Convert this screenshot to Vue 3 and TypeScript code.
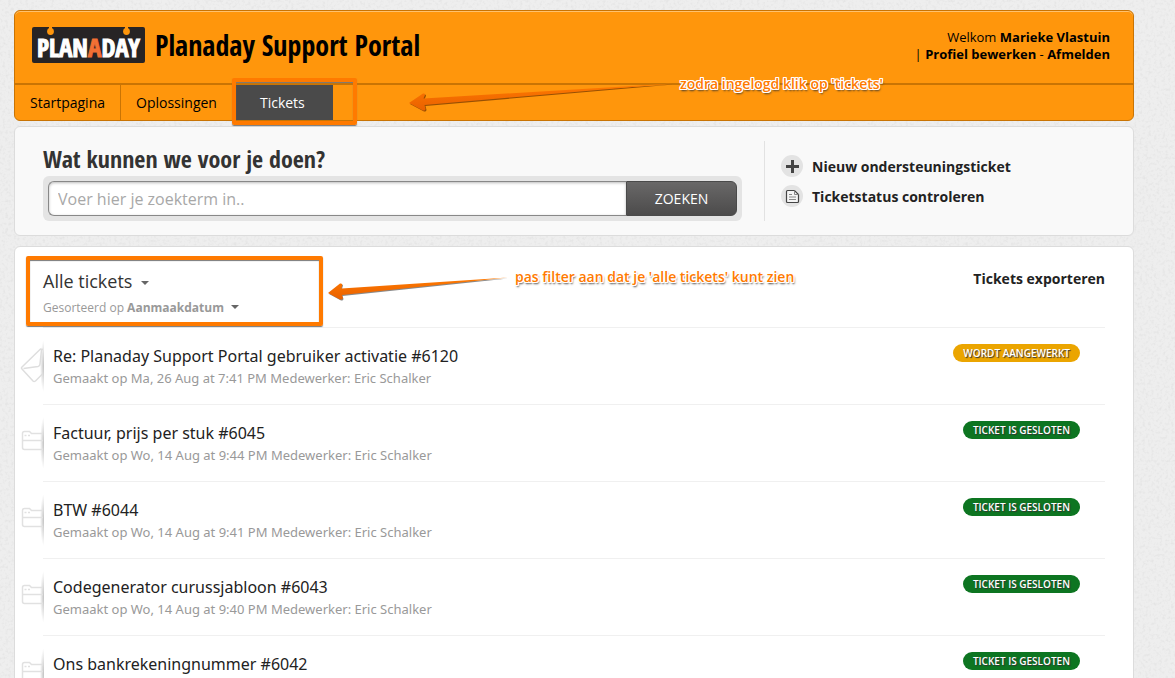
<script setup lang="ts">
import { ref } from 'vue'

interface Ticket {
  id: number
  subject: string
  created?: string
  agent?: string
  status: 'open' | 'closed'
}

const query = ref('')

const tabs = [
  { label: 'Startpagina', active: false },
  { label: 'Oplossingen', active: false },
  { label: 'Tickets', active: true },
]

const statusLabels: Record<Ticket['status'], string> = {
  open: 'Wordt aangewerkt',
  closed: 'Ticket is gesloten',
}

const tickets: Ticket[] = [
  { id: 6120, subject: 'Re: Planaday Support Portal gebruiker activatie', created: 'Ma, 26 Aug at 7:41 PM', agent: 'Eric Schalker', status: 'open' },
  { id: 6045, subject: 'Factuur, prijs per stuk', created: 'Wo, 14 Aug at 9:44 PM', agent: 'Eric Schalker', status: 'closed' },
  { id: 6044, subject: 'BTW', created: 'Wo, 14 Aug at 9:41 PM', agent: 'Eric Schalker', status: 'closed' },
  { id: 6043, subject: 'Codegenerator curussjabloon', created: 'Wo, 14 Aug at 9:40 PM', agent: 'Eric Schalker', status: 'closed' },
  { id: 6042, subject: 'Ons bankrekeningnummer', status: 'closed' },
]
</script>

<template>
  <div class="page">
    <svg class="grain" aria-hidden="true">
      <filter id="grain">
        <feTurbulence type="fractalNoise" baseFrequency="0.35" numOctaves="2" seed="4" />
        <feColorMatrix values="0 0 0 0 0  0 0 0 0 0  0 0 0 0 0  0.9 0 0 0 -0.4" />
      </filter>
      <rect width="100%" height="100%" filter="url(#grain)" />
    </svg>

    <header class="header">
      <div class="brand-row">
        <a class="brand" href="#">
          <svg class="logo" viewBox="0 0 113 36" role="img" aria-label="Planaday">
            <rect width="113" height="36" rx="2" fill="#272425" />
            <g fill="#ff960c">
              <circle cx="18.500" cy="4.500" r="3.400" />
              <rect x="17" width="3" height="4" />
              <circle cx="94.500" cy="4.500" r="3.400" />
              <rect x="93" width="3" height="4" />
            </g>
            <text class="logo-text" x="56.500" y="30" text-anchor="middle">PLAN<tspan class="logo-accent">A</tspan>DAY</text>
          </svg>
          <span class="brand-name">Planaday Support Portal</span>
        </a>
        <div class="welcome">
          <div>Welkom <b>Marieke Vlastuin</b></div>
          <div>| <a href="#">Profiel bewerken</a> - <a href="#">Afmelden</a></div>
        </div>
      </div>
      <nav class="tabs">
        <a v-for="tab in tabs" :key="tab.label" href="#" class="tab" :class="{ active: tab.active }">
          {{ tab.label }}
          <span v-if="tab.active" class="frame tab-frame"></span>
        </a>
      </nav>
      <div class="note note-tab">
        <svg class="arrow" viewBox="0 0 270 34" aria-hidden="true">
          <defs>
            <linearGradient id="arrowFill" x1="0" y1="0" x2="0" y2="1">
              <stop offset="0" stop-color="#ff7a00" />
              <stop offset="1" stop-color="#e96000" />
            </linearGradient>
          </defs>
          <path d="M3 25L17 15.500Q20 15 18.500 18L17.500 20.500L266 5.500L18.500 27L19.500 31Q19 33.500 16 32Z" fill="#6b3200" opacity="0.7" />
          <path d="M2 24L16 14.500Q19 14 17.500 17L16.500 19.500L266 4.500L17.500 26L18.500 30Q18 32.500 15 31Z" fill="url(#arrowFill)" />
        </svg>
        <span class="note-text">zodra ingelogd klik op 'tickets'</span>
      </div>
    </header>

    <section class="panel search-panel">
      <div class="search-side">
        <h2>Wat kunnen we voor je doen?</h2>
        <form class="search" @submit.prevent>
          <input v-model="query" type="text" aria-label="Zoekterm" placeholder="Voer hier je zoekterm in.." />
          <button type="submit">ZOEKEN</button>
        </form>
      </div>
      <div class="quick-links">
        <a href="#">
          <svg viewBox="0 0 22 22" aria-hidden="true">
            <circle cx="11" cy="11" r="11" fill="#e3e3e3" />
            <path d="M11.500 5v13M5 11.500h13" stroke="#444" stroke-width="3" />
          </svg>
          Nieuw ondersteuningsticket
        </a>
        <a href="#">
          <svg viewBox="0 0 22 22" aria-hidden="true">
            <circle cx="11" cy="11" r="11" fill="#e3e3e3" />
            <path d="M6.500 5.500h7l4 4v7q0 1-1 1h-10q-1 0-1-1v-10q0-1 1-1z" fill="#f4f4f4" stroke="#444" stroke-width="1.200" />
            <path d="M13.500 5.500v4h4M8 9.500h3M8 12h7M8 14.500h7" fill="none" stroke="#888" />
          </svg>
          Ticketstatus controleren
        </a>
      </div>
    </section>

    <main class="panel tickets-panel">
      <div class="list-head">
        <div class="filters">
          <button class="filter" type="button" aria-haspopup="menu">Alle tickets <i class="caret"></i></button>
          <button class="sort" type="button" aria-haspopup="menu">Gesorteerd op <b>Aanmaakdatum</b> <i class="caret"></i></button>
          <span class="frame filter-frame"></span>
        </div>
        <div class="note note-filter">
          <svg class="arrow-small" viewBox="0 0 184 28" aria-hidden="true">
            <path d="M3 18L15 8.500Q18 8 16.500 11L16 13.500L182 2.500L16.500 20L17.500 23Q17 25.500 14 24Z" fill="#555" opacity="0.7" />
            <path d="M2 17L14 7.500Q17 7 16 10L15.500 12.500L182 1.500L16 19L17 22Q16 24.500 13 23Z" fill="url(#arrowFill)" />
          </svg>
          <span class="note-text">pas filter aan dat je 'alle tickets' kunt zien</span>
        </div>
        <a class="export" href="#">Tickets exporteren</a>
      </div>

      <ul class="ticket-list">
        <li v-for="ticket in tickets" :key="ticket.id" class="ticket">
          <span class="ticket-icon" aria-hidden="true">
            <svg v-if="ticket.status === 'open'" viewBox="0 0 23 52" fill="none" stroke="#dedede" stroke-width="1.500">
              <path d="M23 9.500L20.500 9L2 27Q1 28 2 29L13 41Q14 42 15.500 41L23 33.500M3.500 28.500L18 26.500Q20 26 20 24L21.500 10" />
            </svg>
            <svg v-else viewBox="0 0 23 52" fill="none" stroke="#e1e1e1" stroke-width="1.500">
              <path d="M24 32.500H4.500Q2.500 32.500 2.500 30.500V16.500Q2.500 14.500 4.500 14.500H9.500L11.500 16.500H24M2.500 23.500H24M4.500 18.500h2M8 18.500h2" />
            </svg>
          </span>
          <div class="ticket-body">
            <a class="subject" href="#">{{ ticket.subject }} #{{ ticket.id }}</a>
            <div v-if="ticket.created" class="meta">Gemaakt op {{ ticket.created }} Medewerker: {{ ticket.agent }}</div>
          </div>
          <span class="badge" :class="ticket.status">{{ statusLabels[ticket.status] }}</span>
        </li>
      </ul>
    </main>
  </div>
</template>

<style>
body {
  background: #eeeeee;
}
</style>

<style scoped>
* {
  box-sizing: border-box;
}

.page {
  position: relative;
  height: 100vh;
  overflow: hidden;
  padding: 10px 41px 0 14px;
  font-family: "Open Sans", "Noto Sans", sans-serif;
  font-size: 14px;
  color: #222;
}

.grain {
  position: absolute;
  inset: 0;
  width: 100%;
  height: 100%;
  opacity: 0.1;
}

a {
  color: inherit;
  text-decoration: none;
}

button {
  font: inherit;
  border: 0;
  cursor: pointer;
}

.header {
  position: relative;
  z-index: 1;
  background: #ff960c;
  border: 1px solid #c97404;
  border-radius: 6px;
  box-shadow: inset 0 1px 0 #ffc16d;
  color: #000;
}

.brand-row {
  display: flex;
  justify-content: space-between;
  height: 72px;
  padding: 16px 23px 0 17px;
}

.brand {
  display: flex;
  align-items: center;
  gap: 10px;
  height: 36px;
}

.logo {
  width: 113px;
  height: 36px;
}

.logo-text {
  font: bold 25px "Open Sans Condensed", "Liberation Sans Narrow", "Liberation Sans", sans-serif;
  fill: #fff;
  stroke: #fff;
  stroke-width: 1px;
}

.logo-accent {
  fill: #f27034;
  stroke: #f27034;
}

.brand-name {
  font: bold 28px/38px "Open Sans Condensed", "Liberation Sans Narrow", "Liberation Sans", sans-serif;
  white-space: nowrap;
}

.welcome {
  font-size: 13px;
  line-height: 17px;
  padding-top: 2px;
  text-align: right;
}

.welcome a {
  font-weight: bold;
}

.tabs {
  display: flex;
  border-top: 2px solid #c97404;
}

.tab {
  position: relative;
  padding: 0 15px;
  line-height: 35px;
  border-right: 1px solid #c97404;
}

.tab.active {
  padding: 0 28px 0 27px;
  background: #4a4a4a;
  border-right: 0;
  color: #fff;
}

.frame {
  position: absolute;
  border: 4px solid #ff7a00;
  border-radius: 2px;
  box-shadow: 0 1px 1px #777, inset 0 1px 1px #777;
  pointer-events: none;
}

.tab-frame {
  inset: -7px -24px -5px -1px;
}

.note {
  position: absolute;
  display: flex;
  align-items: flex-start;
}

.note-tab {
  left: 392px;
  top: 64px;
}

.arrow {
  width: 270px;
  height: 34px;
  margin: 4px 3px 0 0;
}

.note-text {
  color: #ff7a00;
  font-size: 14px;
  font-weight: 650;
  line-height: 18px;
  white-space: nowrap;
  text-shadow: 1px 0 #fff, -1px 0 #fff, 0 1px #fff, 0 -1px #fff, 1px 1px #fff, -1px -1px #fff, 1px -1px #fff, -1px 1px #fff, 1px 2px 2px #333;
}

.panel {
  position: relative;
  border: 1px solid #dcdcdc;
  border-radius: 6px;
}

.search-panel {
  display: flex;
  gap: 22px;
  margin-top: 5px;
  padding: 14px 28px;
  background: #f9f9f9;
}

.search-side {
  flex: 0 1 699px;
}

h2 {
  margin: 2px 0 1px;
  font: bold 24px/32px "Open Sans Condensed", "Liberation Sans Narrow", "Liberation Sans", sans-serif;
  color: #333;
}

.search {
  display: flex;
  padding: 5px;
  background: #e4e4e4;
  border-radius: 6px;
}

.search input {
  flex: 1;
  min-width: 0;
  height: 35px;
  padding: 0 9px;
  border: 1px solid #888;
  border-right: 0;
  border-radius: 6px 0 0 6px;
  background: #fff;
  box-shadow: inset 0 1px 3px #bbb;
  font: inherit;
  font-size: 16px;
}

.search input::placeholder {
  color: #a8a8a8;
}

.search button {
  width: 111px;
  border: 1px solid #4a4a4a;
  border-radius: 0 6px 6px 0;
  background: linear-gradient(#696868, #4c4b4b);
  color: #fff;
}

.quick-links {
  display: flex;
  flex-direction: column;
  gap: 8px;
  padding: 14px 0 0 16px;
  border-left: 1px solid #e2e2e2;
}

.quick-links a {
  display: flex;
  align-items: flex-start;
  gap: 9px;
  font-weight: bold;
  line-height: 24px;
  height: 22px;
}

.quick-links svg {
  width: 22px;
  height: 22px;
}

.tickets-panel {
  margin-top: 10px;
  padding: 0 28px;
  background: #fff;
}

.list-head {
  position: relative;
  display: flex;
  justify-content: space-between;
  height: 81px;
  border-bottom: 1px solid #f0f0f0;
}

.filters {
  display: flex;
  flex-direction: column;
  align-items: flex-start;
  padding-top: 22px;
}

.filters button {
  padding: 0;
  background: none;
}

.filter {
  font-size: 18px;
  line-height: 24px;
  color: #333;
}

.filters .sort {
  margin-top: 6px;
  font-size: 12px;
  line-height: 17px;
  color: #999;
}

.caret {
  display: inline-block;
  margin-left: 4px;
  border: 4px solid transparent;
  border-top-color: #666;
  border-bottom: 0;
  vertical-align: 3px;
}

.filter-frame {
  left: -17px;
  top: 9px;
  width: 297px;
  height: 70px;
}

.note-filter {
  left: 283px;
  top: 21px;
}

.arrow-small {
  width: 184px;
  height: 36px;
  margin-right: 5px;
  padding-top: 8px;
}

.export {
  padding-top: 20px;
  line-height: 24px;
  font-weight: bold;
}

.ticket-list {
  margin: 0;
  padding: 0;
  list-style: none;
}

.ticket {
  position: relative;
  display: flex;
  justify-content: space-between;
  align-items: flex-start;
  height: 77px;
  padding: 16px 25px 0 10px;
  border-bottom: 1px solid #f0f0f0;
}

.ticket-icon {
  position: absolute;
  left: -23px;
  top: 12px;
  width: 24px;
  height: 52px;
  background: radial-gradient(ellipse 4px 26px at 100% 50%, #c0c0c0, transparent);
}

.ticket-icon svg {
  display: block;
  width: 23px;
  height: 52px;
}

.ticket-body {
  font-family: "Noto Sans", "Open Sans", sans-serif;
}

.subject {
  display: block;
  font-size: 16px;
  line-height: 24px;
}

.meta {
  font-size: 13px;
  line-height: 20px;
  color: #999;
}

.badge {
  padding: 0 10px;
  border-radius: 9px;
  color: #fff;
  font-size: 10px;
  font-weight: 650;
  line-height: 18px;
  text-transform: uppercase;
  text-shadow: 1px 1px 1px #333;
}

.badge.open {
  background: #eba500;
}

.badge.closed {
  background: #0d7521;
}
</style>
